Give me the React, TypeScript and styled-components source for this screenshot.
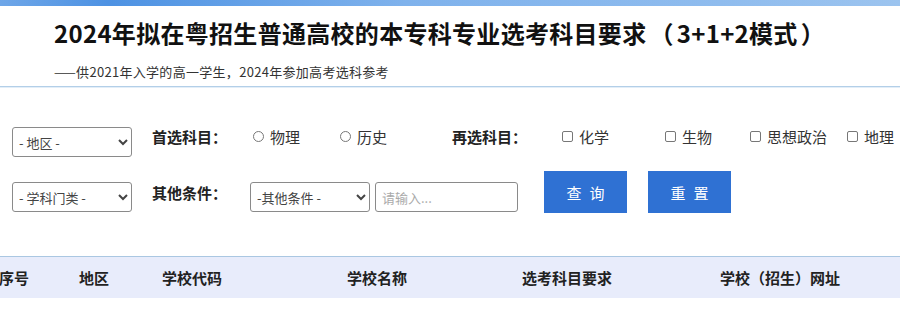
import React from "react"
import styled, { createGlobalStyle } from "styled-components"

const FONT = `"Microsoft YaHei", "Noto Sans CJK SC", "Noto Sans", sans-serif`

const GlobalStyle = createGlobalStyle`
  html, body {
    margin: 0;
    padding: 0;
    background: #fff;
    font-family: ${FONT};
    overflow: hidden;
  }
`

const TopBar = styled.div`
  height: 6px;
  background: linear-gradient(90deg, #6ea6e8 0%, #4d92e3 12%, #7fb2ec 45%, #8fbcee 80%, #9cc4ef 100%);
`

const Header = styled.header`
  padding: 11px 54px 6px;
  border-bottom: 1px solid #b3cfe8;
  box-shadow: 0 1px 0 #e3eef8;
`

const Title = styled.h1`
  margin: 0;
  font-size: 24px;
  line-height: 32px;
  font-weight: 700;
  color: #111;
  letter-spacing: 0.3px;
`

const Paren = styled.span`
  margin: 0 3px;
`

const Subtitle = styled.p`
  margin: 15px 0 0;
  font-size: 13px;
  line-height: 16px;
  letter-spacing: 0.3px;
  color: #333;
`

const Filters = styled.section`
  padding: 40px 0 0 12px;
  display: flex;
  flex-direction: column;
  gap: 14px;
`

const Row = styled.div`
  display: flex;
  align-items: flex-start;
`

const Select = styled.select<{ $w: number; $mt?: number }>`
  width: ${({ $w }) => $w}px;
  height: 30px;
  flex-shrink: 0;
  margin-top: ${({ $mt }) => $mt ?? 0}px;
  font-family: ${FONT};
  font-size: 13px;
  color: #444;
  border: 1px solid #8a8a8a;
  border-radius: 3px;
  background: #fff;
  padding: 0 2px;
`

const Label = styled.span<{ $w: number; $mt?: number; $ml?: number }>`
  width: ${({ $w }) => $w}px;
  margin-top: ${({ $mt }) => $mt ?? 0}px;
  margin-left: ${({ $ml }) => $ml ?? 0}px;
  font-size: 15px;
  line-height: 20px;
  font-weight: 700;
  color: #222;
  flex-shrink: 0;
`

const Option = styled.label<{ $w: number }>`
  width: ${({ $w }) => $w}px;
  display: flex;
  align-items: center;
  gap: 6px;
  font-size: 15px;
  line-height: 20px;
  color: #333;
  flex-shrink: 0;
  white-space: nowrap;
`

const Mark = styled.span<{ $round?: boolean }>`
  width: 9px;
  height: 9px;
  border: 1px solid #777;
  border-radius: ${({ $round }) => ($round ? "50%" : "2px")};
  background: #fff;
  flex-shrink: 0;
  margin-top: -2px;
`

const Input = styled.input`
  width: 143px;
  height: 30px;
  flex-shrink: 0;
  box-sizing: border-box;
  margin: 11px 0 0 5px;
  padding: 0 6px;
  font-family: ${FONT};
  font-size: 13px;
  border: 1px solid #8a8a8a;
  border-radius: 3px;
  &::placeholder {
    color: #aaa;
  }
`

const Button = styled.button<{ $ml: number }>`
  width: 83px;
  height: 42px;
  flex-shrink: 0;
  margin-left: ${({ $ml }) => $ml}px;
  border: none;
  background: #2f71d3;
  color: #fff;
  font-family: ${FONT};
  font-size: 15px;
  letter-spacing: 8px;
  text-indent: 8px;
  cursor: pointer;
`

const TableHead = styled.div`
  margin-top: 43px;
  margin-left: -20px;
  height: 41px;
  border-top: 1px solid #aac7e2;
  background: #e8ecfb;
  display: grid;
  grid-template-columns: 68px 92px 104px 266px 114px 312px;
  align-items: center;
`

const Th = styled.div`
  text-align: center;
  font-size: 15px;
  font-weight: 700;
  color: #222;
  white-space: nowrap;
`

const COLUMNS = ["序号", "地区", "学校代码", "学校名称", "选考科目要求", "学校（招生）网址"]

export default function App() {
  return (
    <>
      <GlobalStyle />
      <TopBar />
      <Header>
        <Title>
          2024年拟在粤招生普通高校的本专科专业选考科目要求<Paren>（</Paren>3+1+2模式<Paren>）</Paren>
        </Title>
        <Subtitle>——供2021年入学的高一学生，2024年参加高考选科参考</Subtitle>
      </Header>
      <Filters>
        <Row>
          <Select $w={120}>
            <option>- 地区 -</option>
          </Select>
          <Label $w={101} $ml={20}>首选科目：</Label>
          <Option $w={87}><Mark $round />物理</Option>
          <Option $w={112}><Mark $round />历史</Option>
          <Label $w={110}>再选科目：</Label>
          <Option $w={103}><Mark />化学</Option>
          <Option $w={85}><Mark />生物</Option>
          <Option $w={97}><Mark />思想政治</Option>
          <Option $w={60}><Mark />地理</Option>
        </Row>
        <Row>
          <Select $w={120} $mt={11}>
            <option>- 学科门类 -</option>
          </Select>
          <Label $w={98} $mt={12} $ml={20}>其他条件：</Label>
          <Select $w={120} $mt={11}>
            <option>-其他条件 -</option>
          </Select>
          <Input placeholder="请输入..." />
          <Button $ml={26}>查询</Button>
          <Button $ml={21}>重置</Button>
        </Row>
      </Filters>
      <TableHead>
        {COLUMNS.map((c) => (
          <Th key={c}>{c}</Th>
        ))}
      </TableHead>
    </>
  )
}
